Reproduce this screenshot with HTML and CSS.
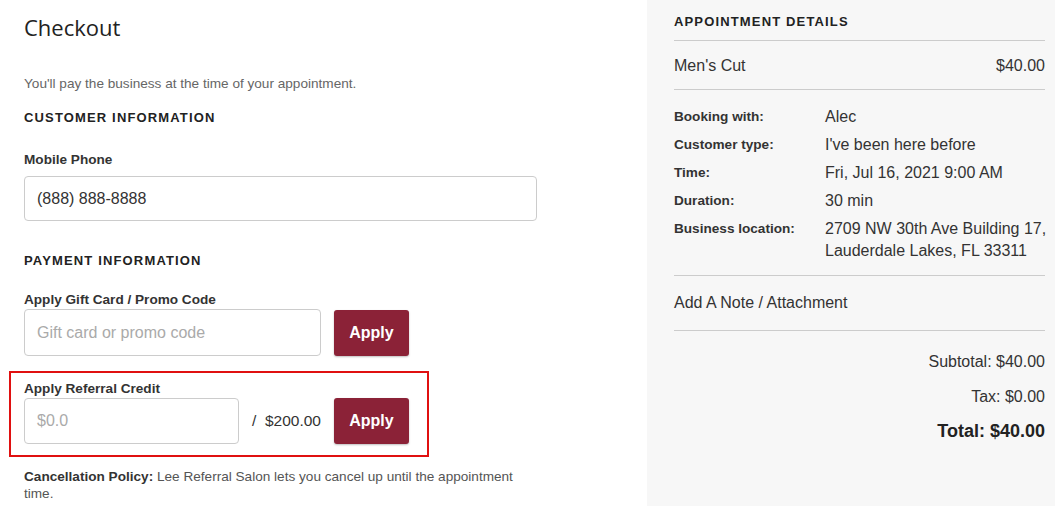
FILE: index.html
```html
<!DOCTYPE html>
<html>
<head>
<meta charset="utf-8">
<link rel="stylesheet" href="styles.css">
</head>
<body>
<div class="page">
  <main class="main">
    <h1 class="title">Checkout</h1>
    <p class="note">You'll pay the business at the time of your appointment.</p>
    <h2 class="section">CUSTOMER INFORMATION</h2>
    <label class="label">Mobile Phone</label>
    <div class="input phone">(888) 888-8888</div>
    <h2 class="section pay">PAYMENT INFORMATION</h2>
    <label class="label">Apply Gift Card / Promo Code</label>
    <div class="row">
      <div class="input promo placeholder">Gift card or promo code</div>
      <button class="btn">Apply</button>
    </div>
    <div class="referral">
      <label class="label">Apply Referral Credit</label>
      <div class="row">
        <div class="input credit placeholder">$0.0</div>
        <span class="of">/&nbsp; $200.00</span>
        <button class="btn">Apply</button>
      </div>
    </div>
    <p class="policy"><b>Cancellation Policy:</b> Lee Referral Salon lets you cancel up until the appointment time.</p>
  </main>
  <aside class="side">
    <h2 class="section side-title">APPOINTMENT DETAILS</h2>
    <div class="service"><span>Men's Cut</span><span>$40.00</span></div>
    <dl class="details">
      <dt>Booking with:</dt><dd>Alec</dd>
      <dt>Customer type:</dt><dd>I've been here before</dd>
      <dt>Time:</dt><dd>Fri, Jul 16, 2021 9:00 AM</dd>
      <dt>Duration:</dt><dd>30 min</dd>
      <dt>Business location:</dt><dd class="addr">2709 NW 30th Ave Building 17,<br>Lauderdale Lakes, FL 33311</dd>
    </dl>
    <div class="add-note">Add A Note / Attachment</div>
    <div class="totals">
      <div class="sub">Subtotal: $40.00</div>
      <div class="tax">Tax: $0.00</div>
      <div class="total">Total: $40.00</div>
    </div>
  </aside>
</div>
</body>
</html>
```

FILE: styles.css
```css
html, body {
  margin: 0;
  padding: 0;
  background: #fff;
  font-family: "Liberation Sans", Arial, sans-serif;
  color: #333;
}
.page {
  display: flex;
  width: 1055px;
  height: 506px;
  overflow: hidden;
}
.main {
  flex: 0 0 623px;
  width: 623px;
  padding: 0 0 0 24px;
  box-sizing: border-box;
}
.title {
  font-family: "Open Sans", "Lato", sans-serif;
  font-weight: 400;
  font-size: 22px;
  color: #222;
  margin: 14px 0 0;
  line-height: 26px;
}
.note {
  font-size: 13.6px;
  color: #666;
  margin: 36px 0 0;
  line-height: 16px;
}
.section {
  font-size: 13px;
  font-weight: 700;
  letter-spacing: 1.15px;
  color: #222;
  margin: 18px 0 0;
  line-height: 16px;
}
.label {
  display: block;
  font-size: 13.6px;
  font-weight: 700;
  color: #333;
  line-height: 16px;
}
.main > .label { margin-top: 26px; }
.section.pay { margin-top: 32px; }
.section.pay + .label { margin-top: 23px; }
.input {
  box-sizing: border-box;
  border: 1px solid #ccc;
  border-radius: 4px;
  font-size: 16px;
  color: #333;
  padding: 0 12px;
  display: flex;
  align-items: center;
}
.placeholder { color: #aaa; }
.phone {
  width: 513px;
  height: 45px;
  margin-top: 8px;
}
.row {
  display: flex;
  align-items: center;
  margin-top: 1px;
}
.promo {
  width: 297px;
  height: 47px;
}
.btn {
  margin-left: 13px;
  width: 75px;
  height: 46px;
  background: #8b2237;
  color: #fff;
  border: none;
  border-radius: 3px;
  font-family: "Liberation Sans", Arial, sans-serif;
  font-weight: 700;
  font-size: 16px;
  box-shadow: 0 1px 2px rgba(0,0,0,0.25);
  padding: 0;
}
.referral {
  margin: 15px 0 0 -15px;
  width: 420px;
  height: 86px;
  box-sizing: border-box;
  border: 2px solid #e01010;
  padding: 8px 0 0 13px;
}
.referral .row { margin-top: 1px; }
.credit {
  width: 215px;
  height: 46px;
}
.of {
  font-size: 15.5px;
  color: #333;
  margin-left: 13px;
}
.referral .btn { margin-left: 13px; }
.policy {
  font-size: 13.6px;
  color: #555;
  width: 512px;
  margin: 11px 0 0;
  line-height: 17px;
}
.policy b { color: #333; }

.side {
  flex: 1 1 auto;
  min-width: 0;
  background: #f7f7f7;
  padding: 0 10px 0 27px;
  margin-left: 24px;
}
.side-title {
  margin: 14px 0 0;
  padding-bottom: 10px;
  border-bottom: 1px solid #ccc;
}
.service {
  display: flex;
  justify-content: space-between;
  font-size: 16px;
  color: #333;
  padding: 16px 0 14px;
  border-bottom: 1px solid #ccc;
  line-height: 18px;
}
.details {
  display: grid;
  grid-template-columns: 151px 1fr;
  row-gap: 6px;
  margin: 0;
  padding: 16px 0 13px;
  border-bottom: 1px solid #ccc;
  align-items: start;
}
.details dt {
  font-size: 13.6px;
  font-weight: 700;
  color: #333;
  line-height: 22px;
}
.details dd {
  margin: 0;
  font-size: 16px;
  color: #333;
  line-height: 22px;
}
.details dd.addr { white-space: nowrap; }
.add-note {
  font-size: 16px;
  color: #333;
  padding: 18px 0 18px;
  line-height: 18px;
  border-bottom: 1px solid #ccc;
}
.totals {
  text-align: right;
  font-size: 16px;
  color: #333;
}
.sub { margin-top: 22px; line-height: 18px; }
.tax { margin-top: 17px; line-height: 18px; }
.total {
  margin-top: 14px;
  font-size: 18px;
  font-weight: 700;
  color: #222;
  line-height: 22px;
}
```
